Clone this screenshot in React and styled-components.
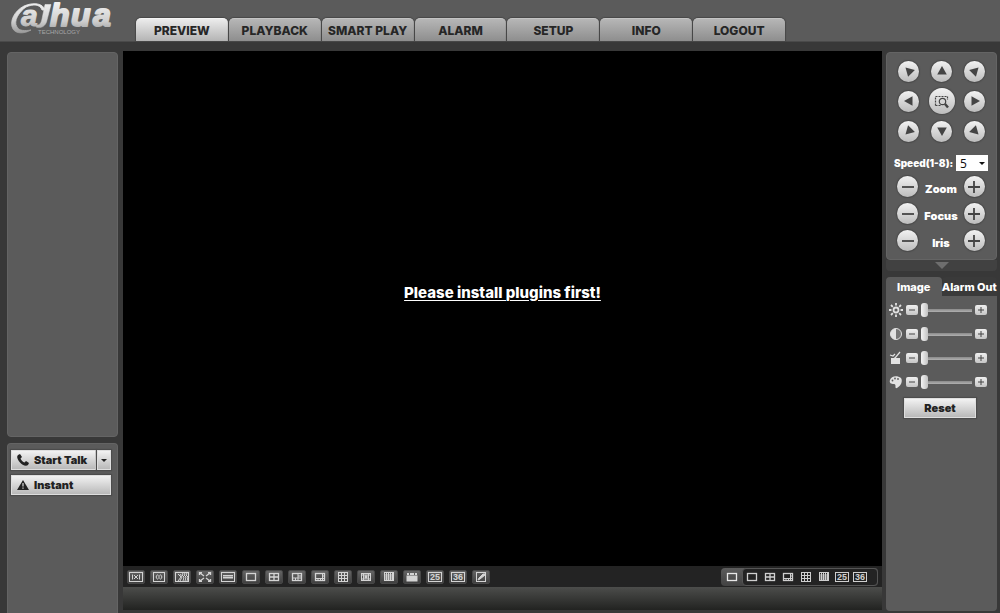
import React, { useState } from "react";
import styled, { createGlobalStyle, css } from "styled-components";

const GlobalStyle = createGlobalStyle`
	* {
		box-sizing: border-box;
	}
	body {
		margin: 0;
		background: #383838;
		font-family: Inter, "Liberation Sans", Arial, sans-serif;
		font-size: 11px;
		font-weight: 900;
		color: #fff;
	}
	button, select, input {
		font: inherit;
		margin: 0;
	}
`;

const Page = styled.div`
	min-height: 100vh;
	display: flex;
	flex-direction: column;
`;
const Header = styled.header`
	height: 42px;
	display: flex;
	align-items: flex-end;
	background: #5b5b5b;
	border-bottom: 1px solid #4a4a4a;
`;
const LogoLink = styled.a`
	width: 136px;
	height: 41px;
	flex-shrink: 0;
`;
const Nav = styled.nav`
	width: 649px;
	display: flex;
	gap: 1px;
`;
const NavTab = styled.a`
	flex: 1 1 0;
	height: 23px;
	display: flex;
	align-items: center;
	justify-content: center;
	border-radius: 5px 5px 0 0;
	border-top: 1px solid ${(props) => (props.$active ? "#f4f4f4" : "#c4c4c4")};
	box-shadow: 0 0 1px 1px #484848;
	background: ${(props) =>
		props.$active
			? "linear-gradient(#ececec, #b4b4b4)"
			: "linear-gradient(#b6b6b6, #8e8e8e)"};
	color: #262626;
	font-size: 12px;
	font-weight: 800;
	text-decoration: none;
	white-space: nowrap;
`;

const Body = styled.div`
	flex: 1;
	display: flex;
	padding: 9px 3px 0 7px;
`;
const LeftColumn = styled.aside`
	width: 111px;
	flex-shrink: 0;
	display: flex;
	flex-direction: column;
	gap: 6px;
	padding-top: 1px;
`;
const Panel = styled.section`
	background: #5b5b5b;
	border: 1px solid #646464;
	border-radius: 4px;
`;
const DeviceList = styled(Panel)`
	flex: 1;
`;
const TalkPanel = styled(Panel)`
	height: 170px;
	padding: 6px 6px 0 3px;
	border-radius: 4px 4px 0 0;
	border-bottom: none;
	display: flex;
	flex-direction: column;
	gap: 5px;
`;
const silver = css`
	border: 1px solid #dedede;
	background: linear-gradient(#f2f2f2, #b9b9b9);
	box-shadow: 0 0 1px 1px #4c4c4c;
	color: #222;
	padding: 0;
	cursor: pointer;
`;
const ButtonLine = styled.div`
	display: flex;
	gap: 1px;
`;
const SilverButton = styled.button`
	${silver}
	flex: ${(props) => (props.$narrow ? "0 0 14px" : "1 1 auto")};
	height: 20px;
	display: flex;
	align-items: center;
	justify-content: ${(props) => (props.$narrow ? "center" : "flex-start")};
	gap: 5px;
	padding-left: ${(props) => (props.$narrow ? 0 : "5px")};
`;

const Main = styled.main`
	flex: 1;
	min-width: 0;
	margin: 0 4px 3px 5px;
	display: flex;
	flex-direction: column;
`;
const Video = styled.div`
	flex: 1;
	background: #000;
	display: flex;
	align-items: center;
	justify-content: center;
	padding-bottom: 33px;
`;
const PluginLink = styled.a`
	color: #fff;
	font-size: 15px;
	font-weight: 800;
	text-decoration: underline;
	text-decoration-thickness: 1px;
	text-underline-offset: 2px;
`;
const Toolbar = styled.div`
	height: 21px;
	display: flex;
	align-items: center;
	justify-content: space-between;
	padding: 1px 4px 0;
	background: #232323;
`;
const ToolGroup = styled.div`
	display: flex;
	gap: 5px;
`;
const ToolButton = styled.button`
	width: 18px;
	height: 14px;
	padding: 0;
	display: grid;
	place-items: center;
	border: 1px solid #484848;
	border-radius: 2px;
	background: linear-gradient(#646464, #404040);
	color: #d4d4d4;
`;
const ChannelGroup = styled.div`
	display: flex;
	height: 18px;
	border-radius: 4px;
	background: linear-gradient(#5c5c5c, #424242);
`;
const ChannelButton = styled.button`
	width: ${(props) => (props.$active ? "21px" : "18px")};
	padding: 0;
	border: none;
	background: none;
	color: ${(props) => (props.$active ? "#e8e8e8" : "#cfcfcf")};
	display: grid;
	place-items: center;
`;
const ChannelList = styled.div`
	display: flex;
	padding-right: 8px;
	border: 1px solid #555;
	border-radius: 4px;
	background: #232323;
`;
const StatusBar = styled.div`
	height: 23px;
	background: linear-gradient(#4c4d4b, #222321);
`;

const RightColumn = styled.aside`
	width: 111px;
	flex-shrink: 0;
	display: flex;
	flex-direction: column;
	padding: 1px 0 2px;
`;
const PtzPanel = styled(Panel)`
	height: 208px;
	padding: 3px 8px 0 7px;
`;
const PtzGrid = styled.div`
	display: grid;
	grid-template-columns: repeat(3, 33px);
	grid-auto-rows: 30px;
	place-items: center;
	margin: 0 -2px;
`;
const RoundButton = styled.button`
	width: ${(props) => (props.$big ? "26px" : "21px")};
	height: ${(props) => (props.$big ? "26px" : "21px")};
	padding: 0;
	border: none;
	border-radius: 50%;
	display: grid;
	place-items: center;
	color: #444;
	background: linear-gradient(#f2f2f2, #bcbcbc);
	box-shadow: 0 0 1px 1px #4b4b4b;
`;
const SpeedRow = styled.label`
	height: 16px;
	margin: 9px 0 2px;
	display: flex;
	align-items: center;
	justify-content: space-between;
	white-space: nowrap;
	font-size: 10px;
`;
const SelectWrap = styled.span`
	width: 32px;
	height: 16px;
	display: flex;
	align-items: center;
	background: #fff;
	color: #111;
	padding-right: 3px;
`;
const SpeedSelect = styled.select`
	appearance: none;
	flex: 1;
	min-width: 0;
	height: 16px;
	padding: 0 0 0 4px;
	border: none;
	background: transparent;
	font-family: "Noto Sans", sans-serif;
	font-size: 12px;
	font-weight: 400;
	color: #111;
`;
const LensRow = styled.div`
	height: 27px;
	margin: 0 3px;
	display: flex;
	align-items: center;
	justify-content: space-between;
`;
const LensLabel = styled.span`
	padding-top: 5px;
`;
const Collapse = styled.button`
	height: 11px;
	padding: 0;
	border: none;
	border-radius: 0 0 4px 4px;
	background: #414141;
	color: #6e6e6e;
	display: grid;
	place-items: center;
`;
const ImageTabs = styled.div`
	display: flex;
	margin-top: 6px;
`;
const ImageTab = styled.button`
	flex: 1;
	height: 19px;
	padding: 0;
	border: none;
	border-radius: 4px 4px 0 0;
	background: ${(props) => (props.$active ? "#5b5b5b" : "#3a3a3a")};
	color: #fff;
	font-size: 11px;
	font-weight: 800;
	white-space: nowrap;
`;
const ImagePanel = styled.section`
	flex: 1;
	background: #5b5b5b;
	border-radius: 0 0 4px 4px;
	padding: 2px 10px 0 3px;
`;
const SliderRow = styled.div`
	height: 24px;
	display: flex;
	align-items: center;
	gap: 3px;
	color: #e2e2e2;
`;
const StepButton = styled.button`
	width: 12px;
	height: 10px;
	flex-shrink: 0;
	padding: 0;
	border: none;
	border-radius: 2px;
	background: linear-gradient(#efefef, #c6c6c6);
	color: #444;
	display: grid;
	place-items: center;
`;
const Slider = styled.input`
	appearance: none;
	flex: 1;
	min-width: 0;
	height: 14px;
	background: transparent;
	&::-webkit-slider-runnable-track {
		height: 3px;
		background: linear-gradient(#8a8a8a, #b0b0b0);
	}
	&::-webkit-slider-thumb {
		appearance: none;
		width: 7px;
		height: 14px;
		margin-top: -6px;
		border-radius: 3px;
		background: linear-gradient(90deg, #f4f4f4, #c2c2c2);
	}
`;
const ResetButton = styled.button`
	${silver}
	display: block;
	width: 72px;
	height: 20px;
	margin: 4px 0 0 15px;
`;

const Logo = () => (
	<svg width='130' height='41' viewBox='0 0 130 41'>
		<defs>
			<linearGradient id='metal' gradientUnits='userSpaceOnUse' x1='0' y1='3' x2='0' y2='33'>
				<stop offset='0' stopColor='#f0f0f0' />
				<stop offset='0.6' stopColor='#cfcfcf' />
				<stop offset='1' stopColor='#999' />
			</linearGradient>
		</defs>
		<g
			fill='url(#metal)'
			stroke='url(#metal)'
			strokeLinejoin='round'
			fontFamily='Liberation Sans'
			fontWeight='700'
			fontStyle='italic'>
			<path
				d='M45 10C43 3 33 2 24 6C14 11 9 22 13 29C16 34 24 34 31 30C25 31 19 31 17 27C13 21 19 12 26 7C33 4 40 4 42 10Z'
				strokeWidth='0.8'
			/>
			<text x='21' y='26' fontSize='30' strokeWidth='1'>a</text>
			<path d='M45 4.500H51L47 20C46 26 41 29 36 27L37 25C40 25 41 23 42 19Z' strokeWidth='0.5' />
			<text x='50' y='26' fontSize='32' strokeWidth='2'>h</text>
			<text x='71' y='26' fontSize='32' strokeWidth='2'>u</text>
			<text x='93' y='26' fontSize='32' strokeWidth='2'>a</text>
		</g>
		<text x='38' y='34' fill='#a8a8a8' fontFamily='Liberation Sans' fontSize='6' fontWeight='400'>
			TECHNOLOGY
		</text>
	</svg>
);

const glyphs = {
	original: (
		<>
			<rect x='0.500' y='0.500' width='13' height='9' />
			<path d='M3.500 2.500v5M10.500 2.500v5M5 3l2 2l-2 2M9 3l-2 2l2 2' />
		</>
	),
	ratio: (
		<>
			<rect x='1.500' y='0.500' width='11' height='9' />
			<path d='M5.500 2.500L4 5l1.500 2.500M8.500 2.500L10 5l-1.500 2.500M7 3v4' />
		</>
	),
	fluency: (
		<>
			<rect x='0.500' y='0.500' width='13' height='9' />
			<path d='M3 2l3 3l-3 4M5 2l2 3l-2 4M8 1l-1 2l2 2l-1 4M10 1l-1 2l2 2l-1 4M12 1l-1 2l2 2l-1 4' />
		</>
	),
	full: (
		<path
			d='M1.500 3V0.500H4M10 0.500h2.500V3M12.500 7v2.500H10M4 9.500H1.500V7M2 1l4 3M12 1l-4 3M2 9l4-3M12 9l-4-3'
			strokeWidth='1.300'
		/>
	),
	wide: (
		<>
			<rect x='0.500' y='0.500' width='13' height='9' />
			<path d='M2 3.500h10' />
			<path d='M2 5.500h10' strokeWidth='2' />
		</>
	),
	one: <rect x='2.500' y='1.500' width='9' height='7' strokeWidth='1.300' />,
	four: (
		<>
			<rect x='2.500' y='1.500' width='9' height='7' strokeWidth='1.300' />
			<path d='M7 1.500v7M2.500 5h9' strokeWidth='1.300' />
		</>
	),
	six: (
		<>
			<rect x='2.500' y='1.500' width='9' height='7' strokeWidth='1.300' />
			<path d='M8 1.500v7M2.500 6h9M5.500 6v2.500M8 4h3.500' />
		</>
	),
	eight: (
		<>
			<rect x='2.500' y='1.500' width='9' height='7' strokeWidth='1.300' />
			<path d='M9.500 1.500v7M2.500 6.500h9M5 6.500v2M7.500 6.500v2M9.500 4h2' />
		</>
	),
	nine: (
		<>
			<rect x='2.500' y='0.500' width='9' height='9' />
			<path d='M5.500 1v8M8.500 1v8M2.500 3.500h9M2.500 6.500h9' />
		</>
	),
	thirteen: (
		<>
			<rect x='2.500' y='1.500' width='9' height='7' />
			<path d='M4.500 1.500v7M9.500 1.500v7M2.500 3h9M2.500 7h9M7 3v1' />
			<rect x='6' y='4' width='2' height='2' fill='currentColor' />
		</>
	),
	sixteen: (
		<>
			<rect x='2.500' y='0.500' width='9' height='8' />
			<path d='M4.500 1v8M6.500 1v8M8.500 1v8M10.500 1v8M2.500 3h9M2.500 5h9M2.500 7h9' />
		</>
	),
	twenty: (
		<>
			<rect x='2' y='4' width='10' height='5' fill='currentColor' />
			<path d='M2 2h2M5 2h4M10 2h2' strokeWidth='2' />
		</>
	),
	custom: (
		<>
			<rect x='2.500' y='0.500' width='9' height='9' />
			<path d='M4 8l1-2l4-4l2 0v1l-5 4z' fill='currentColor' />
		</>
	),
};

const Glyph = ({ name }) => (
	<svg width='14' height='10' viewBox='0 0 14 10' fill='none' stroke='currentColor'>
		{glyphs[name] || (
			<>
				<rect x='0.500' y='0.500' width='13' height='9' />
				<text x='7' y='8' textAnchor='middle' fill='currentColor' stroke='none' fontFamily='Liberation Sans' fontSize='9' fontWeight='700'>
					{name}
				</text>
			</>
		)}
	</svg>
);

const Triangle = ({ angle }) => (
	<svg width='12' height='12' viewBox='-6 -6 12 12'>
		<path d='M0-5L4.800 3.500H-4.800Z' fill='currentColor' transform={`rotate(${angle})`} />
	</svg>
);

const Caret = ({ size = 6, color = "currentColor" }) => (
	<svg width={size} height={size / 2} viewBox='0 0 6 3'>
		<path d='M0 0H6L3 3Z' fill={color} />
	</svg>
);

const Sign = ({ plus, size }) => (
	<svg width={size} height={size} viewBox='0 0 12 12' stroke='currentColor' strokeWidth={size > 9 ? 1.8 : 2}>
		<path d={plus ? "M0 6H12M6 0V12" : "M0 6H12"} />
	</svg>
);

const AreaZoom = () => (
	<svg width='16' height='16' viewBox='0 0 16 16' fill='none' stroke='#444'>
		<path d='M1.500 12.500V3.500H13.500V7M1.500 12.500H7' strokeDasharray='2 1' strokeWidth='1.200' />
		<circle cx='8.500' cy='8.500' r='3.200' strokeWidth='1.200' />
		<path d='M11 11l3 3.500' strokeWidth='2.400' />
	</svg>
);

const adjustIcons = {
	Brightness: (
		<>
			<circle cx='7' cy='7' r='2.500' fill='none' stroke='currentColor' strokeWidth='1.800' />
			<path d='M7 0v2.500M7 11.500V14M0 7h2.500M11.500 7H14M2 2l1.800 1.800M10.200 10.200L12 12M12 2l-1.800 1.800M2 12l1.800-1.800' stroke='currentColor' strokeWidth='1.800' />
		</>
	),
	Contrast: (
		<>
			<circle cx='7' cy='7' r='5.500' fill='#777' stroke='currentColor' />
			<path d='M7 1.500a5.500 5.500 0 0 0 0 11z' fill='currentColor' />
		</>
	),
	Saturation: (
		<>
			<path d='M2 7H5L6 6L7 7H11V13H2Z' fill='currentColor' />
			<path d='M6 7L11 1M1 4l3 1l2-2' fill='none' stroke='currentColor' strokeWidth='1.200' />
		</>
	),
	Hue: (
		<>
			<path d='M1 5C2 1 8 0 12 3C14 6 12 11 8 13C5 14 8 9 5 9C2 9 0 8 1 5Z' fill='currentColor' />
			<g fill='#5b5b5b'>
				<circle cx='3.500' cy='5.500' r='0.900' />
				<circle cx='6' cy='3.500' r='0.900' />
				<circle cx='9' cy='4' r='0.900' />
			</g>
		</>
	),
};

const menu = ["PREVIEW", "PLAYBACK", "SMART PLAY", "ALARM", "SETUP", "INFO", "LOGOUT"];
const tools = ["original", "ratio", "fluency", "full", "wide", "one", "four", "six", "eight", "nine", "thirteen", "sixteen", "twenty", "25", "36", "custom"];
const channels = ["one", "four", "eight", "nine", "sixteen", "25", "36"];
const directions = [-45, 0, 45, -90, null, 90, -135, 180, 135];

const App = () => {
	const [page, setPage] = useState("PREVIEW");
	const [tab, setTab] = useState("Image");
	const [speed, setSpeed] = useState("5");
	const [levels, setLevels] = useState({ Brightness: 0, Contrast: 0, Saturation: 0, Hue: 0 });

	const setLevel = (name, value) => {
		setLevels({ ...levels, [name]: Math.max(0, Math.min(100, value)) });
	};

	return (
		<Page>
			<GlobalStyle />
			<Header>
				<LogoLink href='#' aria-label='alhua technology'>
					<Logo />
				</LogoLink>
				<Nav>
					{menu.map((item) => (
						<NavTab key={item} href='#' $active={item === page} onClick={() => setPage(item)}>
							{item}
						</NavTab>
					))}
				</Nav>
			</Header>
			<Body>
				<LeftColumn>
					<DeviceList />
					<TalkPanel>
						<ButtonLine>
							<SilverButton>
								<svg width='12' height='12' viewBox='0 0 12 12' fill='#222'>
									<path d='M1 1L3 0L5 3L3.500 4.500C4 6 6 8 7.500 8.500L9 7L12 9L11 11C9 13 5 11 3 8.500C1 6-1 3 1 1Z' />
								</svg>
								Start Talk
							</SilverButton>
							<SilverButton $narrow aria-label='Talk options'>
								<Caret />
							</SilverButton>
						</ButtonLine>
						<ButtonLine>
							<SilverButton>
								<svg width='12' height='10' viewBox='0 0 12 10'>
									<path d='M6 0L12 10H0Z' fill='#222' />
									<path d='M6 3v3.500M6 7.500v1.200' stroke='#ddd' strokeWidth='1.200' />
								</svg>
								Instant
							</SilverButton>
						</ButtonLine>
					</TalkPanel>
				</LeftColumn>
				<Main>
					<Video>
						<PluginLink href='#'>Please install plugins first!</PluginLink>
					</Video>
					<Toolbar>
						<ToolGroup>
							{tools.map((name) => (
								<ToolButton key={name} aria-label={name}>
									<Glyph name={name} />
								</ToolButton>
							))}
						</ToolGroup>
						<ChannelGroup>
							<ChannelButton $active aria-label='current layout'>
								<Glyph name='one' />
							</ChannelButton>
							<ChannelList>
								{channels.map((name) => (
									<ChannelButton key={name} aria-label={name}>
										<Glyph name={name} />
									</ChannelButton>
								))}
							</ChannelList>
						</ChannelGroup>
					</Toolbar>
					<StatusBar />
				</Main>
				<RightColumn>
					<PtzPanel>
						<PtzGrid>
							{directions.map((angle) =>
								angle === null ? (
									<RoundButton key='area' $big aria-label='Area zoom'>
										<AreaZoom />
									</RoundButton>
								) : (
									<RoundButton key={angle} aria-label={`Move ${angle}`}>
										<Triangle angle={angle} />
									</RoundButton>
								)
							)}
						</PtzGrid>
						<SpeedRow>
							Speed(1-8):
							<SelectWrap>
								<SpeedSelect value={speed} onChange={(e) => setSpeed(e.target.value)}>
									{[1, 2, 3, 4, 5, 6, 7, 8].map((n) => (
										<option key={n}>{n}</option>
									))}
								</SpeedSelect>
								<Caret />
							</SelectWrap>
						</SpeedRow>
						{["Zoom", "Focus", "Iris"].map((name) => (
							<LensRow key={name}>
								<RoundButton aria-label={`${name} out`}>
									<Sign size={12} />
								</RoundButton>
								<LensLabel>{name}</LensLabel>
								<RoundButton aria-label={`${name} in`}>
									<Sign plus size={12} />
								</RoundButton>
							</LensRow>
						))}
					</PtzPanel>
					<Collapse aria-label='Collapse'>
						<Caret size={14} />
					</Collapse>
					<ImageTabs>
						{["Image", "Alarm Out"].map((name) => (
							<ImageTab key={name} $active={name === tab} onClick={() => setTab(name)}>
								{name}
							</ImageTab>
						))}
					</ImageTabs>
					<ImagePanel>
						{Object.keys(levels).map((name) => (
							<SliderRow key={name}>
								<svg width='14' height='14' viewBox='0 0 14 14'>
									{adjustIcons[name]}
								</svg>
								<StepButton aria-label={`${name} down`} onClick={() => setLevel(name, levels[name] - 1)}>
									<Sign size={6} />
								</StepButton>
								<Slider
									type='range'
									aria-label={name}
									value={levels[name]}
									onChange={(e) => setLevel(name, Number(e.target.value))}
								/>
								<StepButton aria-label={`${name} up`} onClick={() => setLevel(name, levels[name] + 1)}>
									<Sign plus size={6} />
								</StepButton>
							</SliderRow>
						))}
						<ResetButton>Reset</ResetButton>
					</ImagePanel>
				</RightColumn>
			</Body>
		</Page>
	);
};

export default App;
